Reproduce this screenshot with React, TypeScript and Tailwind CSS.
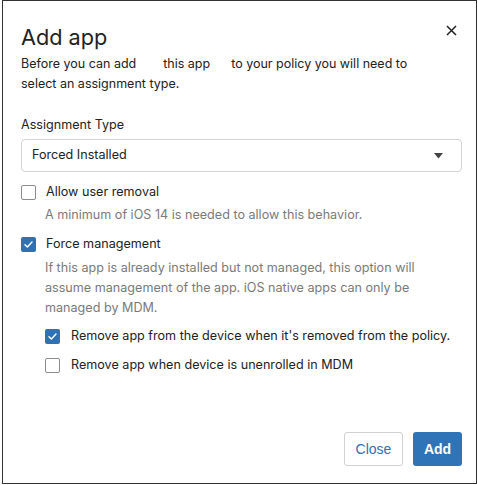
import React from "react";

function Box({ checked }: { checked?: boolean }) {
  if (checked) {
    return (
      <span className="flex h-[15px] w-[15px] shrink-0 items-center justify-center rounded-[2px] bg-[#2f71b3]">
        <svg width="11" height="11" viewBox="0 0 12 12" fill="none">
          <path d="M2.2 6.3 L4.8 8.8 L9.8 3.4" stroke="white" strokeWidth="1.6" strokeLinecap="round" strokeLinejoin="round" />
        </svg>
      </span>
    );
  }
  return <span className="h-[15px] w-[15px] shrink-0 rounded-[2px] border border-[#8c8c8c] bg-white" />;
}

export default function App() {
  return (
    <div className="ml-[2px] h-[484px] w-[475px] border border-[#333] bg-white text-[#222]" style={{ fontFamily: "Inter, 'Noto Sans', sans-serif" }}>
      <div className="relative flex h-full flex-col pl-[18px] pr-[14px] pt-[20px]">
        <button className="absolute right-[18px] top-[22px] flex h-[14px] w-[14px] items-center justify-center">
          <svg width="11" height="11" viewBox="0 0 11 11">
            <path d="M1 1 L10 10 M10 1 L1 10" stroke="#222" strokeWidth="1.5" />
          </svg>
        </button>
        <h1 className="text-[21.7px] leading-[32px] font-normal">Add app</h1>
        <p className="mt-[1px] text-[12.5px] leading-[20px]">
          Before you can add<span className="inline-block w-[27px]"></span>this app<span className="inline-block w-[21px]"></span>to your policy you will need to
          <br />
          select an assignment type.
        </p>
        <div className="mt-[21px] text-[12.6px] leading-[20px]">Assignment Type</div>
        <div className="mt-[4px] flex h-[33px] items-center justify-between rounded-[4px] border border-[#d4d4d4] pl-[10px] pr-[18px] text-[12.6px]">
          <span>Forced Installed</span>
          <svg width="9" height="6" viewBox="0 0 9 6">
            <path d="M0 0 H9 L4.5 5.5 Z" fill="#444" />
          </svg>
        </div>
        <div className="mt-[10px] flex h-[20px] items-center gap-[10px] text-[12.6px]">
          <Box />
          <span>Allow user removal</span>
        </div>
        <div className="mt-[3px] pl-[24px] text-[12.6px] leading-[20px] text-[#7a7a7a]">
          A minimum of iOS 14 is needed to allow this behavior.
        </div>
        <div className="mt-[9px] flex h-[20px] items-center gap-[10px] text-[12.6px]">
          <Box checked />
          <span>Force management</span>
        </div>
        <div className="mt-[4px] pl-[24px] text-[12.6px] leading-[20px] text-[#7a7a7a]">
          If this app is already installed but not managed, this option will
          <br />
          assume management of the app. iOS native apps can only be
          <br />
          managed by MDM.
        </div>
        <div className="mt-[8px] flex h-[20px] items-center gap-[11px] pl-[24px] text-[12.6px]">
          <Box checked />
          <span>Remove app from the device when it's removed from the policy.</span>
        </div>
        <div className="mt-[9px] flex h-[20px] items-center gap-[11px] pl-[24px] text-[12.6px]">
          <Box />
          <span>Remove app when device is unenrolled in MDM</span>
        </div>
        <div className="mt-auto mb-[17px] flex justify-end gap-[10px]" style={{ fontFamily: "'Liberation Sans', Arial, sans-serif" }}>
          <button className="h-[34px] w-[59px] rounded-[3px] border border-[#d0d0d0] bg-white text-[14px] text-[#2f71b3]">Close</button>
          <button className="h-[34px] w-[49px] rounded-[3px] bg-[#2f74b6] text-[14px] font-bold text-white">Add</button>
        </div>
      </div>
    </div>
  );
}
